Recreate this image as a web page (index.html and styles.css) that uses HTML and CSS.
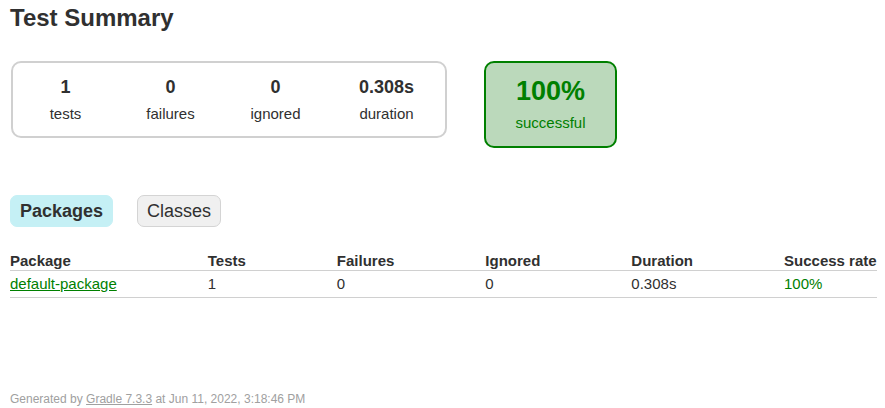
FILE: index.html
```html
<!DOCTYPE html>
<html>
<head>
<meta charset="utf-8">
<title>Test results - Test Summary</title>
<link rel="stylesheet" href="styles.css">
</head>
<body>
<div class="content">
  <h1 class="title">Test Summary</h1>
  <div class="summary">
    <div class="summary-group">
      <div class="info-box"><div class="counter">1</div><p class="label">tests</p></div>
      <div class="info-box"><div class="counter">0</div><p class="label">failures</p></div>
      <div class="info-box"><div class="counter">0</div><p class="label">ignored</p></div>
      <div class="info-box info-duration"><div class="counter">0.308s</div><p class="label">duration</p></div>
    </div>
    <div class="success-rate">
      <div class="percent">100%</div>
      <p class="label">successful</p>
    </div>
  </div>
  <ul class="tab-links">
    <li class="tab-link selected"><h2 class="tab-title">Packages</h2></li>
    <li class="tab-link"><a class="tab-anchor" href="#tab1">Classes</a></li>
  </ul>
  <table class="results">
    <thead>
      <tr><th>Package</th><th>Tests</th><th>Failures</th><th>Ignored</th><th>Duration</th><th>Success rate</th></tr>
    </thead>
    <tbody>
      <tr><td class="success"><a class="pkg-link" href="#">default-package</a></td><td>1</td><td>0</td><td>0</td><td>0.308s</td><td class="success">100%</td></tr>
    </tbody>
  </table>
  <div class="footer">Generated by <a class="footer-link" href="#">Gradle 7.3.3</a> at Jun 11, 2022, 3:18:46 PM</div>
</div>
</body>
</html>
```

FILE: styles.css
```css
html, body {
  margin: 0;
  padding: 0;
  background: #ffffff;
}
body {
  font-family: "Liberation Sans", Arial, sans-serif;
  font-size: 15px;
  color: #303030;
}
.content {
  padding: 4px 10px 0 10px;
}
.title {
  margin: 0;
  font-size: 24px;
  line-height: 28px;
  font-weight: bold;
  white-space: nowrap;
}
.summary {
  display: flex;
  align-items: flex-start;
  margin-top: 29px;
  padding-left: 1px;
}
.summary-group {
  display: flex;
  border: 2px solid #d0d0d0;
  border-radius: 10px;
  padding: 1px 0;
}
.info-box {
  width: 105px;
  padding: 13px 0;
  text-align: center;
}
.info-duration {
  width: 117px;
}
.counter {
  font-size: 18px;
  line-height: 21px;
  font-weight: bold;
  margin-bottom: 7px;
}
.label {
  margin: 0;
  line-height: 17px;
}
.success-rate {
  width: 129px;
  margin-left: 37px;
  padding: 13px 0 15px 0;
  text-align: center;
  border: 2px solid #008000;
  border-radius: 10px;
  background: #bbd9bb;
  color: #008000;
}
.percent {
  font-size: 27px;
  line-height: 31px;
  font-weight: bold;
  margin-bottom: 7px;
}
.tab-links {
  display: flex;
  list-style: none;
  margin: 47px 0 0 0;
  padding: 0;
}
.tab-link {
  padding: 5px 9px;
  margin-right: 24px;
  border: 1px solid #d4d4d4;
  border-radius: 7px;
  background: #f0f0f0;
}
.tab-link.selected {
  background: #c5f0f5;
  border-color: #c5f0f5;
}
.tab-title {
  margin: 0;
  font-size: 18px;
  line-height: 20px;
  font-weight: bold;
}
.tab-anchor {
  display: block;
  font-size: 18px;
  line-height: 20px;
  color: #303030;
  text-decoration: none;
}
.results {
  margin-top: 24px;
  border-collapse: collapse;
  border-bottom: 1px solid #d0d0d0;
}
.results th {
  text-align: left;
  white-space: nowrap;
  font-weight: bold;
  line-height: 17px;
  padding: 1px 0 1px 91px;
  border-bottom: 1px solid #d0d0d0;
}
.results td {
  white-space: nowrap;
  line-height: 17px;
  padding: 4px 0 5px 91px;
}
.results th:first-child,
.results td:first-child {
  padding-left: 0;
}
.success, .pkg-link {
  color: #008000;
}
.footer {
  margin-top: 94px;
  font-size: 12px;
  line-height: 14px;
  color: #a0a0a0;
  white-space: nowrap;
}
.footer-link {
  color: #a0a0a0;
}
```
